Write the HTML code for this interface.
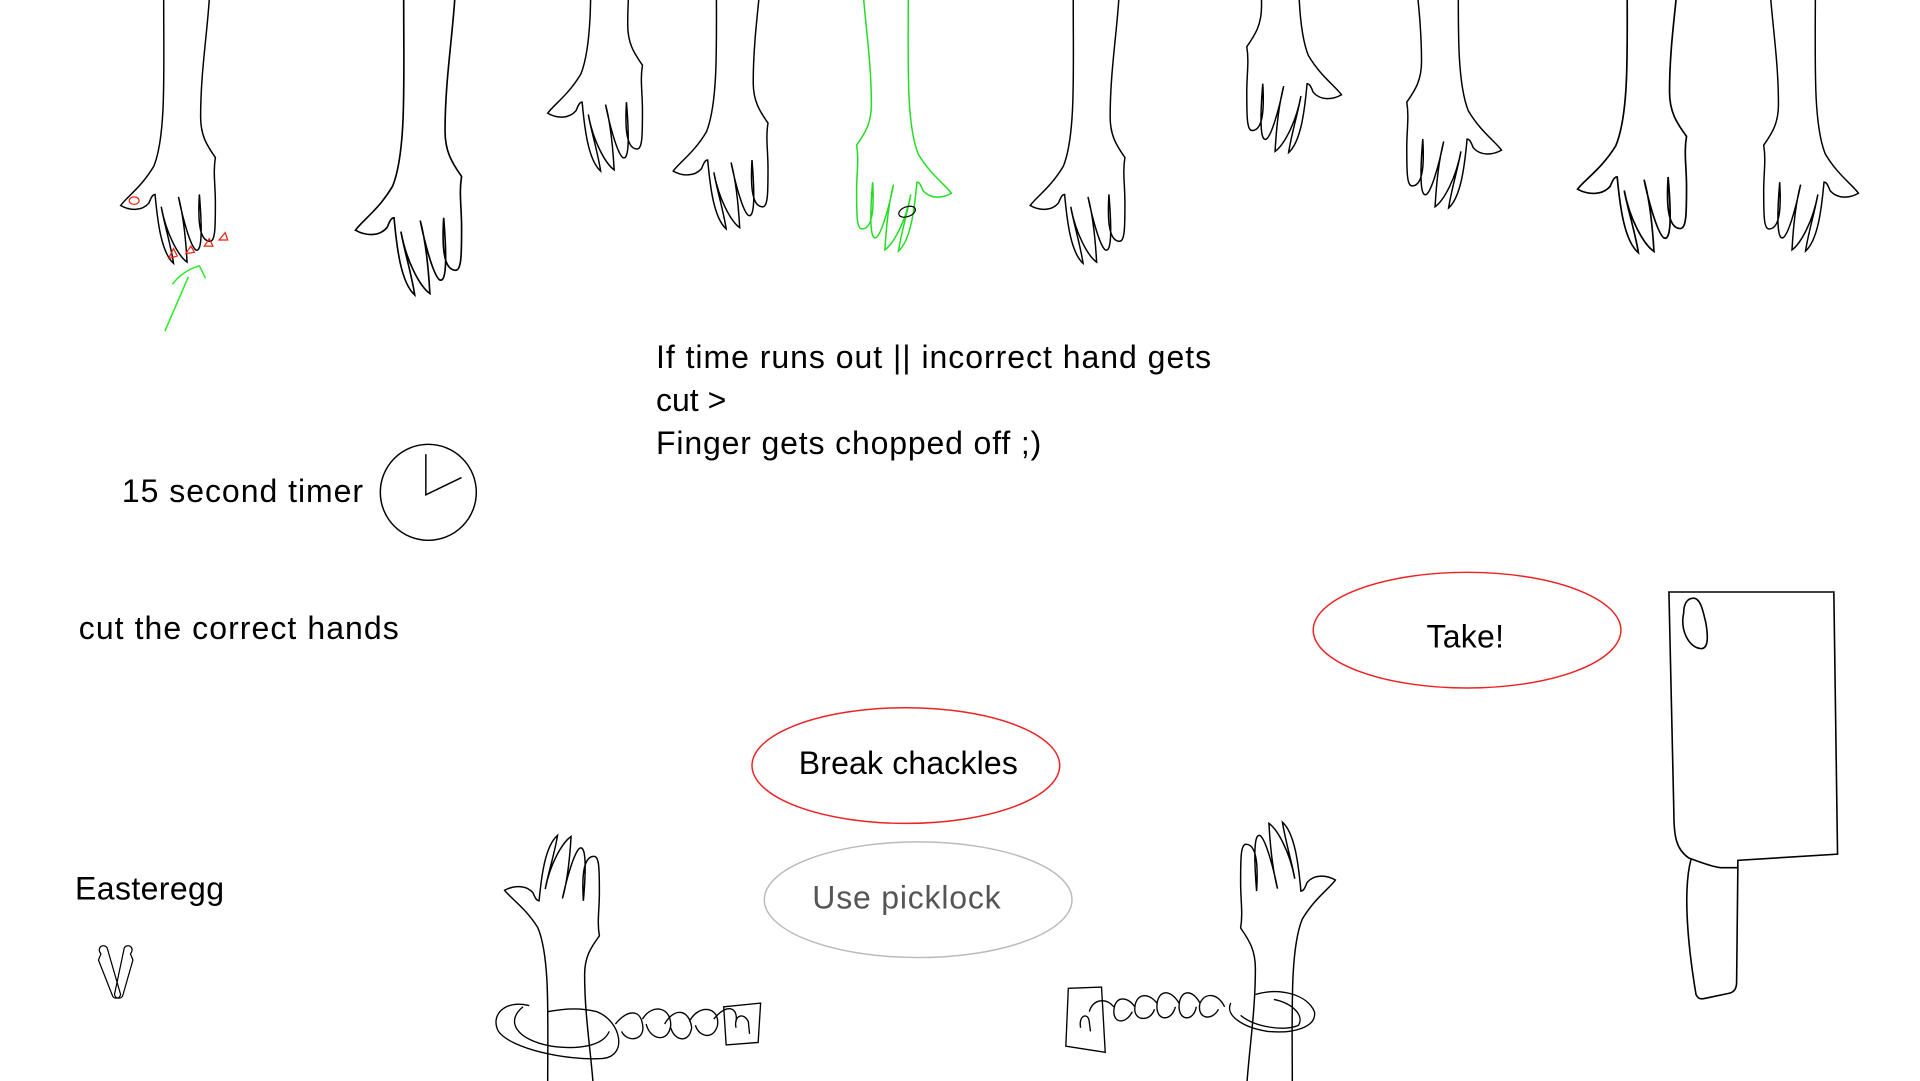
<!DOCTYPE html>
<html><head><meta charset="utf-8"><style>
html,body{margin:0;padding:0;background:#fff;overflow:hidden}
svg{display:block}
text{font-family:"Liberation Sans",sans-serif;font-size:26px;fill:#000}
</style></head><body>
<svg width="1920" height="1081" viewBox="0 0 1560 878.3" preserveAspectRatio="none" xmlns="http://www.w3.org/2000/svg">
<defs>
<path id="hand" fill="none" stroke-width="1.2" d="M0,0 C0,60 2,110 -8,135 C-18,152 -30,160 -35,167 C-28,171 -18,172 -12,165 C-10,160 -9,158 -7,158 C-5,180 -2,205 8,214 C6,200 0,180 -2,168 C2,190 12,208 19,213 C18,195 16,175 12,160 C16,180 22,200 26,203 C30,205 32,195 29,158 C28,175 28,195 37,196 C42,197 42,185 42,165 C42,150 40,140 42,128 C35,118 30,110 30,95 C30,60 35,30 37,0"/>
</defs>
<g stroke="#000" fill="none">
<use href="#hand" transform="translate(133,0)"/>
<use href="#hand" transform="translate(328,0) scale(1.12)"/>
<use href="#hand" transform="translate(480,-75)"/>
<use href="#hand" transform="translate(582,-28)"/>
<use href="#hand" transform="translate(738,-10) scale(-1,1)" stroke="#22dd22"/>
<use href="#hand" transform="translate(872,0)"/>
<use href="#hand" transform="translate(1055,-90) scale(-1,1)"/>
<use href="#hand" transform="translate(1185,-45) scale(-1,1)"/>
<use href="#hand" transform="translate(1322,-30) scale(1.15,1.1)"/>
<use href="#hand" transform="translate(1475,-10) scale(-1,1)"/>
<use href="#hand" transform="translate(445,882) scale(1,-0.95)"/>
<use href="#hand" transform="translate(1050,882) scale(-1,-1)"/>
</g>
<!-- red nails -->
<g stroke="#e21" fill="none" stroke-width="1">
<ellipse cx="109" cy="163" rx="4" ry="3"/>
<path d="M137,210 l4,-8 l3,6z M151,206 l4,-6 l3,5z M166,200 l4,-6 l3,6z M178,195 l5,-6 l2,6z"/>
</g>
<!-- green arrow & ring -->
<g stroke="#22ee22" fill="none" stroke-width="1.2">
<path d="M134,269 L153,225 M140,231 C147,222 155,218 162,216 L167,226"/>
</g>
<ellipse cx="737" cy="172" rx="7" ry="4" stroke="#000" fill="none" transform="rotate(-20 737 172)"/>
<!-- text -->
<text x="533" y="299" textLength="451">If time runs out || incorrect hand gets</text>
<text x="533" y="334">cut &gt;</text>
<text x="533" y="369" textLength="313">Finger gets chopped off ;)</text>
<text x="99" y="408" textLength="196">15 second timer</text>
<text x="64" y="519" textLength="260">cut the correct hands</text>
<text x="61" y="731" textLength="121">Easteregg</text>
<text x="1159" y="526" textLength="63">Take!</text>
<text x="649" y="629" textLength="178">Break chackles</text>
<text x="660" y="738" textLength="153" style="fill:#555">Use picklock</text>
<!-- clock -->
<g stroke="#000" fill="none" stroke-width="1.2">
<circle cx="348" cy="400" r="39"/>
<path d="M346,369 L346,402 L375,388"/>
</g>
<!-- ellipses -->
<ellipse cx="1192" cy="512" rx="125" ry="47" fill="none" stroke="#e22" stroke-width="1.2"/>
<ellipse cx="736" cy="622" rx="125" ry="47" fill="none" stroke="#e22" stroke-width="1.2"/>
<ellipse cx="746" cy="731" rx="125" ry="47" fill="none" stroke="#bbb" stroke-width="1.2"/>
<!-- cleaver -->
<g stroke="#000" fill="none" stroke-width="1.3">
<path d="M1356,481 L1490,481 L1493,694 L1412,699 L1412,705 L1398,705 C1390,704 1380,700 1372,697 C1362,690 1360,680 1360,660 Z"/>
<path d="M1374,698 C1368,720 1370,760 1378,808 C1380,812 1382,812 1386,811 L1405,807 C1410,806 1411,802 1411,798 L1412,705"/>
<path d="M1376,486 C1370,486 1368,492 1368,498 C1365,512 1372,526 1382,527 C1388,527 1388,518 1386,506 C1384,498 1382,486 1376,486 Z"/>
</g>
<!-- pliers -->
<g stroke="#000" fill="none" stroke-width="1">
<path d="M82,775 C78,770 84,766 87,770 L98,808 C97,812 92,812 91,808 L80,780 Z"/>
<path d="M106,775 C110,770 104,766 101,770 L93,808 C94,812 99,812 100,808 L108,780 Z"/>
</g>
<!-- cuffs left -->
<g stroke="#000" fill="none" stroke-width="1.1">
<path d="M430,817 C410,812 398,825 405,838 C415,852 460,862 490,860 C510,858 505,830 485,822 C470,818 455,820 445,822"/>
<path d="M425,818 C410,830 420,845 448,850 C470,853 490,850 495,838"/>
<path d="M500,832 C510,820 520,820 522,832 C525,845 510,848 505,838 M522,828 C530,815 545,818 545,833 C543,848 528,845 525,832 M540,832 C548,818 560,820 562,835 C560,848 548,846 545,835 M560,830 C568,815 585,818 583,833 C580,845 568,843 565,833 M580,828 C590,815 600,818 598,830"/>
<path d="M588,818 L618,815 L616,847 L590,849 Z M598,835 C596,825 604,822 608,830 L609,840"/>
<!-- cuffs right -->
<path d="M1020,808 C1040,802 1062,808 1068,822 C1070,835 1050,840 1030,838 C1010,835 995,825 1000,815"/>
<path d="M1035,812 C1050,815 1060,825 1055,833 C1045,838 1020,835 1008,825"/>
<path d="M995,818 C990,808 980,805 975,815 C972,828 985,830 990,820 M975,815 C968,802 958,805 958,818 C958,830 970,830 972,818 M958,815 C950,802 940,805 940,818 C940,830 952,830 955,818 M940,815 C932,805 922,808 922,820 C922,830 935,830 938,820 M922,818 C915,808 905,810 905,822 C905,832 915,832 920,822 M905,818 C898,810 888,812 885,822"/>
<path d="M868,803 L895,802 L898,855 L866,850 Z M878,835 C876,825 884,822 885,830 L886,838"/>
</g>
</svg>
</body></html>
